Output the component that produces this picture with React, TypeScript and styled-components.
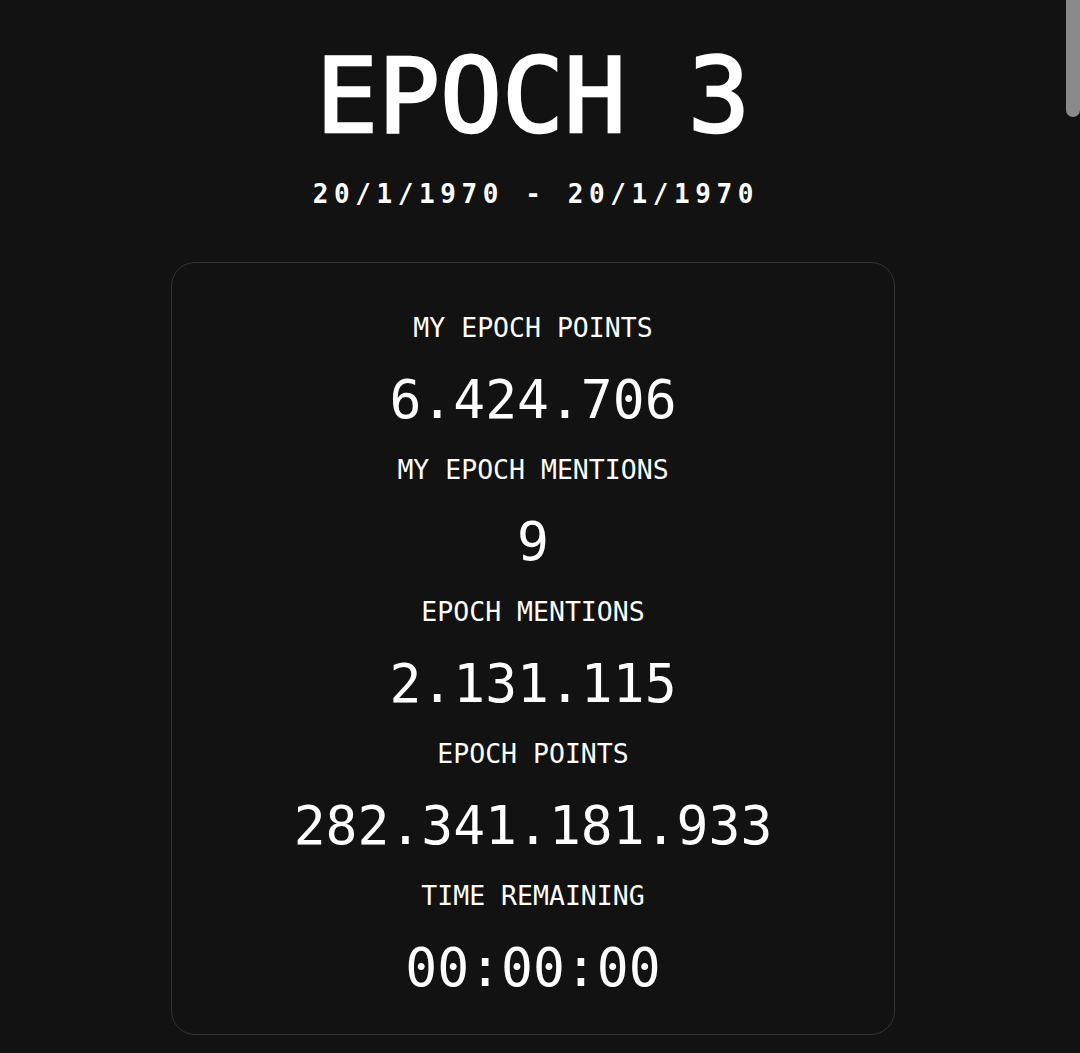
import React from "react";
import styled, { createGlobalStyle } from "styled-components";

const Global = createGlobalStyle`
  html, body {
    margin: 0;
    padding: 0;
    background: #121212;
    color: #ffffff;
    font-family: "DejaVu Sans Mono", "Liberation Mono", monospace;
  }
`;

const Page = styled.main`
  display: flex;
  flex-direction: column;
  align-items: center;
  padding: 45px 14px 0 0;
  min-height: 900vh;
  box-sizing: border-box;
`;

const ScrollThumb = styled.div`
  position: fixed;
  top: 0;
  right: 0;
  width: 14px;
  height: 117px;
  background: #8a8a8a;
  border-radius: 0 0 7px 7px;
`;

const Title = styled.h1`
  margin: 0;
  font-size: 103px;
  line-height: 1;
  font-weight: 400;
  letter-spacing: 0;
  -webkit-text-stroke: 2.5px #ffffff;
`;

const DateRange = styled.div`
  margin-top: 33px;
  font-size: 26px;
  line-height: 1;
  font-weight: 700;
  letter-spacing: 5.6px;
  padding-left: 5.6px;
`;

const Card = styled.section`
  margin-top: 55px;
  width: 724px;
  box-sizing: border-box;
  border: 1px solid #343434;
  border-radius: 24px;
  padding: 51px 0 39px;
  display: flex;
  flex-direction: column;
  align-items: center;
  gap: 29px;
`;

const Stat = styled.div`
  display: flex;
  flex-direction: column;
  align-items: center;
  gap: 32px;
`;

const Label = styled.div`
  font-size: 26.5px;
  line-height: 27px;
  font-weight: 400;
`;

const Value = styled.div`
  font-size: 53px;
  line-height: 54px;
  font-weight: 400;
`;

const stats = [
  { label: "MY EPOCH POINTS", value: "6.424.706" },
  { label: "MY EPOCH MENTIONS", value: "9" },
  { label: "EPOCH MENTIONS", value: "2.131.115" },
  { label: "EPOCH POINTS", value: "282.341.181.933" },
  { label: "TIME REMAINING", value: "00:00:00" },
];

export default function App() {
  return (
    <>
      <Global />
      <Page>
        <Title>EPOCH 3</Title>
        <DateRange>20/1/1970 - 20/1/1970</DateRange>
        <Card>
          {stats.map((s) => (
            <Stat key={s.label}>
              <Label>{s.label}</Label>
              <Value>{s.value}</Value>
            </Stat>
          ))}
        </Card>
      </Page>
      <ScrollThumb />
    </>
  );
}
